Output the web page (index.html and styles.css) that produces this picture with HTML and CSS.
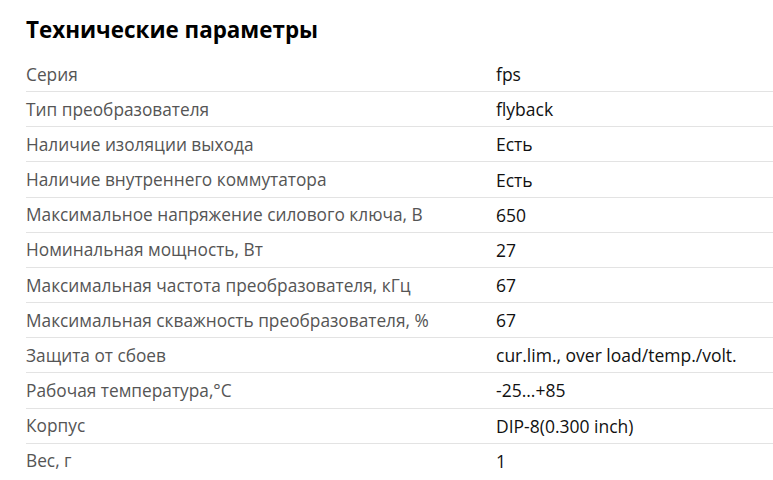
FILE: index.html
```html
<!DOCTYPE html>
<html lang="ru">
<head>
<meta charset="utf-8">
<link rel="stylesheet" href="styles.css">
</head>
<body>
<section class="specs">
  <h2 class="specs-title">Технические параметры</h2>
  <div class="specs-table">
    <div class="row"><div class="label">Серия</div><div class="value">fps</div></div>
    <div class="row"><div class="label">Тип преобразователя</div><div class="value">flyback</div></div>
    <div class="row"><div class="label">Наличие изоляции выхода</div><div class="value">Есть</div></div>
    <div class="row"><div class="label">Наличие внутреннего коммутатора</div><div class="value">Есть</div></div>
    <div class="row"><div class="label">Максимальное напряжение силового ключа, В</div><div class="value">650</div></div>
    <div class="row"><div class="label">Номинальная мощность, Вт</div><div class="value">27</div></div>
    <div class="row"><div class="label">Максимальная частота преобразователя, кГц</div><div class="value">67</div></div>
    <div class="row"><div class="label">Максимальная скважность преобразователя, %</div><div class="value">67</div></div>
    <div class="row"><div class="label">Защита от сбоев</div><div class="value">cur.lim., over load/temp./volt.</div></div>
    <div class="row"><div class="label">Рабочая температура,°C</div><div class="value">-25...+85</div></div>
    <div class="row"><div class="label">Корпус</div><div class="value">DIP-8(0.300 inch)</div></div>
    <div class="row"><div class="label">Вес, г</div><div class="value">1</div></div>
  </div>
</section>
</body>
</html>
```
FILE: styles.css
```css
html, body {
  margin: 0;
  padding: 0;
  background: #fff;
  overflow: hidden;
}
body {
  font-family: "Open Sans", "Liberation Sans", sans-serif;
}
.specs {
  padding: 13px 0 0 26px;
}
.specs-title {
  margin: 0 0 10px 0;
  font-size: 22.4px;
  font-weight: 700;
  line-height: 34px;
  color: #000;
}
.specs-table {
  display: flex;
  flex-direction: column;
}
.row {
  display: grid;
  grid-template-columns: 470px 1fr;
  height: 34.17px;
  align-items: center;
  border-bottom: 1px solid #e3e3e3;
  font-size: 17.3px;
  white-space: nowrap;
}
.row:last-child {
  border-bottom: none;
}
.label {
  color: #555;
}
.value {
  color: #111;
  font-size: 17.5px;
}
```
